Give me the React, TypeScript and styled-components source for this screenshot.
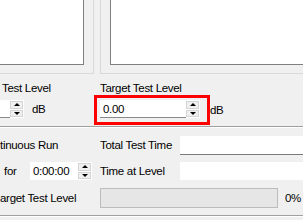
import React from 'react';
import styled, { createGlobalStyle } from 'styled-components';

const GlobalStyle = createGlobalStyle`
  html, body {
    margin: 0;
    padding: 0;
    background: #f0f0f0;
  }
  body {
    font-family: "Liberation Sans", Arial, sans-serif;
    font-size: 11.5px;
    letter-spacing: -0.3px;
    color: #000;
  }
`;

const Window = styled.div`
  width: 303px;
  height: 220px;
  overflow: hidden;
  background: #f0f0f0;
  display: flex;
  flex-direction: column;
`;

const TopRow = styled.div`
  display: flex;
  gap: 6px;
  height: 74px;
  flex-shrink: 0;
`;

const GroupBox = styled.div<{ side: 'left' | 'right' }>`
  box-sizing: border-box;
  height: 74px;
  border-bottom: 1px solid #d9d9d9;
  ${({ side }) =>
    side === 'left'
      ? `width: 94px; border-right: 1px solid #d9d9d9; padding-right: 9px;`
      : `flex: 1; border-left: 1px solid #d9d9d9; padding-left: 9px;`}
  padding-bottom: 8px;
  display: flex;
`;

const Panel = styled.div<{ side: 'left' | 'right' }>`
  flex: 1;
  background: #fff;
  border-bottom: 1px solid #7f7f7f;
  ${({ side }) =>
    side === 'left' ? `border-right: 1px solid #7f7f7f;` : `border-left: 1px solid #7f7f7f;`}
`;

const LevelRow = styled.div`
  display: flex;
  height: 52px;
  flex-shrink: 0;
`;

const LevelCol = styled.div<{ width?: number }>`
  display: flex;
  flex-direction: column;
  width: ${({ width }) => (width ? `${width}px` : 'auto')};
  flex: ${({ width }) => (width ? 'none' : '1')};
`;

const Label = styled.div<{ indent?: number }>`
  line-height: 13px;
  height: 13px;
  margin-top: 8px;
  padding-left: ${({ indent }) => indent ?? 0}px;
  white-space: nowrap;
`;

const InputLine = styled.div<{ top?: number }>`
  display: flex;
  align-items: center;
  margin-top: ${({ top }) => top ?? 0}px;
`;

const Highlight = styled.div`
  border: 3px solid #ff0000;
  padding: 2px 7px 4px 3px;
  display: flex;
`;

const Field = styled.div<{ width: number; underline?: boolean }>`
  box-sizing: border-box;
  width: ${({ width }) => width}px;
  height: 18px;
  background: #fff;
  padding-left: 3px;
  line-height: 18px;
  white-space: nowrap;
  overflow: hidden;
  border-bottom: ${({ underline }) => (underline ? '1px solid #8a8a8a' : 'none')};
`;

const Spin = styled.div`
  box-sizing: border-box;
  width: 14px;
  height: 18px;
  display: flex;
  flex-direction: column;
  background: #fff;
  padding: 1px 1px 1px 0;
  gap: 1px;
`;

const SpinButton = styled.div<{ dir: 'up' | 'down' }>`
  flex: 1;
  background: #f0f0f0;
  border: 1px solid #d4d4d4;
  display: flex;
  align-items: center;
  justify-content: center;
  &::after {
    content: '';
    width: 0;
    height: 0;
    border-left: 3px solid transparent;
    border-right: 3px solid transparent;
    ${({ dir }) =>
      dir === 'up' ? 'border-bottom: 3px solid #000;' : 'border-top: 3px solid #000;'}
  }
`;

const Unit = styled.span<{ gap: number }>`
  margin-left: ${({ gap }) => gap}px;
  line-height: 13px;
`;

const Separator = styled.div`
  height: 0;
  border-top: 1px solid #a0a0a0;
  border-bottom: 1px solid #fff;
  flex-shrink: 0;
`;

const TimeGrid = styled.div`
  display: grid;
  grid-template-columns: 100px 80px 1fr;
  grid-template-rows: 18px 18px 20px;
  row-gap: 8px;
  padding: 8px 0 7px;
  align-items: center;
  flex-shrink: 0;
`;

const Text = styled.div<{ indent?: number; width?: number }>`
  white-space: nowrap;
  padding-left: ${({ indent }) => indent ?? 0}px;
  ${({ width }) => (width ? `width: ${width}px;` : '')}
`;

const Inline = styled.div`
  display: flex;
  align-items: center;
`;

const TextBox = styled.div<{ underline?: boolean }>`
  height: 18px;
  background: #fff;
  border-bottom: ${({ underline }) => (underline ? '1px solid #7a7a7a' : 'none')};
`;

const ProgressCell = styled.div`
  grid-column: 2 / 4;
  display: flex;
  align-items: center;
  gap: 7px;
`;

const Progress = styled.div`
  box-sizing: border-box;
  width: 178px;
  height: 20px;
  background: #e6e6e6;
  border: 1px solid #bcbcbc;
`;

const Spinner = () => (
  <Spin>
    <SpinButton dir="up" />
    <SpinButton dir="down" />
  </Spin>
);

export default function App() {
  return (
    <Window>
      <GlobalStyle />
      <TopRow>
        <GroupBox side="left">
          <Panel side="left" />
        </GroupBox>
        <GroupBox side="right">
          <Panel side="right" />
        </GroupBox>
      </TopRow>

      <LevelRow>
        <LevelCol width={94}>
          <Label indent={2}>Test Level</Label>
          <InputLine top={5}>
            <Field width={10} underline />
            <Spinner />
            <Unit gap={8}>dB</Unit>
          </InputLine>
        </LevelCol>
        <LevelCol>
          <Label indent={6}>Target Test Level</Label>
          <InputLine>
            <Highlight>
              <Field width={86} underline>0.00</Field>
              <Spinner />
            </Highlight>
            <Unit gap={0}>dB</Unit>
          </InputLine>
        </LevelCol>
      </LevelRow>

      <Separator />

      <TimeGrid>
        <Text>tinuous Run</Text>
        <Text>Total Test Time</Text>
        <TextBox underline />

        <Inline>
          <Text indent={4} width={26}>for</Text>
          <Field width={48}>0:00:00</Field>
          <Spinner />
        </Inline>
        <Text>Time at Level</Text>
        <TextBox />

        <Text>arget Test Level</Text>
        <ProgressCell>
          <Progress />
          <Text>0%</Text>
        </ProgressCell>
      </TimeGrid>

      <Separator />
    </Window>
  );
}
